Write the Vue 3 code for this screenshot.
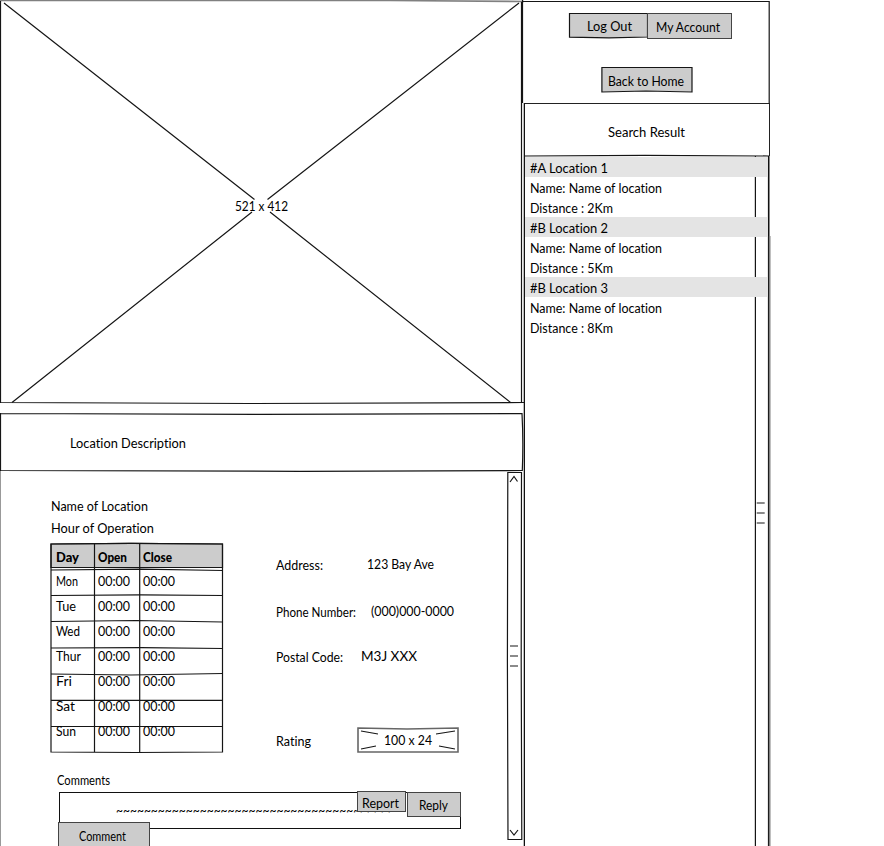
<script setup>
import { h } from 'vue'

// One line of lettering, fitted to the width its wireframe slot has.
const Label = (props) =>
  h('svg', { class: 'label', width: props.w, height: 18 }, [
    h('text', { x: 0, y: 13.5, textLength: props.w, lengthAdjust: 'spacingAndGlyphs' }, props.t),
  ])
Label.props = ['t', 'w']

const results = [
  { title: '#A Location 1', distance: 'Distance : 2Km' },
  { title: '#B Location 2', distance: 'Distance : 5Km' },
  { title: '#B Location 3', distance: 'Distance : 8Km' },
]

const days = [
  ['Mon', 22], ['Tue', 20], ['Wed', 24], ['Thur', 25], ['Fri', 16], ['Sat', 19], ['Sun', 20],
].map(([name, w], i) => ({ name, w, shift: 2.5 - i * 1.1 }))

const tildes = '~'.repeat(40)
</script>

<template>
  <div class="page">
    <main class="left">
      <section class="map">
        <svg class="ink" viewBox="0 0 524 404" width="524" height="404">
          <path class="soft" d="M0 .5H390L524 1.5" />
          <path d="M.5 1V403M521.5 2V403M0 402.5L250 403.5L524 402.5" />
          <path d="M4 3L254.500 199.500M267.500 199.500L519 3M252 212L12 402.500M270 212L510.500 402.500" />
        </svg>
        <Label t="521 x 412" :w="53" />
      </section>

      <header class="desc-head">
        <svg class="ink" viewBox="0 0 524 59" width="524" height="59">
          <path d="M0 .5L260 1.300L522 .5Q523.500 28 522.300 57.500L300 58.300L0 57.500M.5 0V58" />
        </svg>
        <Label t="Location Description" :w="116" />
      </header>

      <div class="desc">
        <section class="details">
          <Label t="Name of Location" :w="97" />
          <Label class="hour" t="Hour of Operation" :w="103" />

          <div class="info">
            <div class="hours">
              <svg class="ink" viewBox="0 0 172 210" width="172" height="210">
                <path class="fill" d="M0 1L80 .3L171.500 1V24.500H0Z" />
                <path d="M0 1L80 .3L171.500 1V209L85 209.500L0 209Z" />
                <path d="M0 24.500H172M0 27L90 26.200L172 27.500" />
                <path d="M0 52.500L90 51.800L172 52.500M0 78.500L85 77.500L172 79M0 105L90 104.700L172 105.500M0 131L80 132L172 130.500M0 157.300H172M0 183.500H172" />
                <path d="M43.500 1V209M88.700 1V209" />
              </svg>
              <div class="row head">
                <Label t="Day" :w="23" /><Label t="Open" :w="29" /><Label t="Close" :w="29" />
              </div>
              <div v-for="d in days" :key="d.name" class="row">
                <div class="cells" :style="{ marginTop: d.shift + 'px' }">
                  <Label :t="d.name" :w="d.w" /><Label t="00:00" :w="32" /><Label t="00:00" :w="32" />
                </div>
              </div>
            </div>

            <div class="fields">
              <div class="field address"><Label t="Address:" :w="47" /><Label class="up" t="123 Bay Ave" :w="67" /></div>
              <div class="field phone"><Label t="Phone Number:" :w="80" /><Label class="up" t="(000)000-0000" :w="83" /></div>
              <div class="field postal"><Label t="Postal Code:" :w="67" /><Label class="up" t="M3J XXX" :w="56" /></div>
              <div class="field rating">
                <Label t="Rating" :w="35" />
                <div class="stars">
                  <svg class="ink" viewBox="0 0 102 26" width="102" height="26">
                    <path class="soft dark" d="M1 1L50 2L101 1V25H1Z" />
                    <path d="M4 4L21 7M4 22L19 19M98 4L79 7M98 22L82 19" />
                  </svg>
                  <Label t="100 x 24" :w="48" />
                </div>
              </div>
            </div>
          </div>

          <Label class="comments-title" t="Comments" :w="53" />
          <div class="comment-box">
            <Label :t="tildes" :w="279" />
            <div class="btn report"><Label t="Report" :w="37" /></div>
            <div class="btn reply"><Label t="Reply" :w="29" /></div>
            <div class="btn comment"><Label t="Comment" :w="47" /></div>
          </div>
        </section>

        <svg class="scroll" viewBox="0 0 17 375" width="17" height="375">
          <path d="M.8 1.500H14.500L14.200 190L14.800 368.500H1L.4 190Z" />
          <path d="M3 11L7 5.500L10.500 10.500M3 359L7 364L11 359" />
          <path class="soft dark" d="M3 175H11M3 185H11M3 195H11" />
        </svg>
      </div>
    </main>

    <aside class="right">
      <div class="account">
        <svg class="ink" viewBox="0 0 248 104" width="248" height="104">
          <path d="M0 1.500H247.200V103M.5 0V103" />
        </svg>
        <div class="buttons">
          <div class="btn logout">
            <svg class="ink" viewBox="0 0 79 25" width="79" height="25"><path class="fill" d="M.5 .5H78.500V24L40 24.800L.5 24.200Z" /></svg>
            <Label t="Log Out" :w="45" />
          </div>
          <div class="btn my"><Label t="My Account" :w="64" /></div>
        </div>
        <div class="btn home">
          <svg class="ink" viewBox="0 0 91 26" width="91" height="26"><path class="fill" d="M.9 .5H91V25L45 24L.9 25Z" /></svg>
          <Label t="Back to Home" :w="76" />
        </div>
      </div>

      <div class="panel">
        <header class="result-head"><Label t="Search Result" :w="77" /></header>
        <div class="results">
          <svg class="ink" viewBox="0 0 247 690" width="247" height="690">
            <path d="M0 0L120 -.6L244 0M230.400 0V690" />
            <path class="edge" d="M243.700 0V690" />
            <path class="soft" d="M244.700 80V690" />
            <path class="soft dark" d="M231.700 347H239.700M231.700 357H239.700M231.700 367H239.700" />
          </svg>
          <div v-for="r in results" :key="r.title" class="result">
            <div class="title"><Label :t="r.title" :w="78" /></div>
            <div><Label t="Name: Name of location" :w="132" /></div>
            <div><Label :t="r.distance" :w="83" /></div>
          </div>
        </div>
      </div>
    </aside>
  </div>
</template>

<style>
body { background: #fff; overflow: hidden; }
.label {
  display: block;
  flex: none;
  position: relative;
  overflow: visible;
  font: 12.5px Lato, "Open Sans", sans-serif;
  font-variant-ligatures: none;
  fill: #000;
}
</style>

<style scoped>
.page { display: flex; width: 884px; height: 846px; overflow: hidden; background: #fff; }
.ink { position: absolute; left: 0; top: 0; overflow: visible; }
path { fill: none; stroke: #151515; stroke-width: 1.2; }
path.fill { fill: #ccc; }
path.soft { stroke: #808080; stroke-width: 1.6; }
path.dark { stroke: #666; }
path.edge { stroke: #111; stroke-width: 1.6; }

.left { width: 522px; flex: none; }
.map { position: relative; height: 403px; display: flex; padding: 197px 0 0 235px; box-sizing: border-box; }
.desc-head { position: relative; height: 58px; margin-top: 10px; padding: 21px 0 0 70px; box-sizing: border-box; }
.desc { display: flex; height: 375px; }
.details { flex: none; width: 507px; box-sizing: border-box; padding: 26px 0 0 50px; border-left: 1px solid #999; }
.scroll { flex: none; overflow: visible; }
.hour { margin-top: 4px; }
.info { display: flex; margin-top: 6px; height: 228px; }

.hours { position: relative; width: 172px; }
.row { height: 26.1px; overflow: hidden; }
.row.head, .cells { display: grid; grid-template-columns: 42px 45px auto; padding-left: 5px; }
.row.head { height: 26.5px; padding-top: 5px; box-sizing: border-box; overflow: visible; }
.head .label { font-weight: 900; }

.fields { margin-left: 53px; padding-top: 13px; }
.field { display: flex; height: 18px; }
.up { margin-top: -1px; }
.address { gap: 44px; }
.phone { gap: 15px; margin-top: 29px; }
.postal { gap: 18px; margin-top: 27px; }
.rating { gap: 46px; margin-top: 66px; }
.stars { position: relative; width: 102px; height: 26px; margin-top: -5px; padding: 4px 0 0 27px; box-sizing: border-box; }

.comments-title { margin-left: 6px; }
.comment-box {
  position: relative;
  width: 402px;
  height: 37px;
  box-sizing: border-box;
  margin: 3px 0 0 8px;
  padding: 7.5px 0 0 56px;
  border: 1px solid #111;
}
.btn { position: relative; box-sizing: border-box; background: #ccc; border: 1.6px solid #444; display: flex; }
.report, .reply, .comment { position: absolute; }
.report { left: 297px; top: -2px; width: 49px; height: 21px; padding: 2px 0 0 4px; }
.reply { left: 347px; top: -1px; width: 54px; height: 25px; padding: 3px 0 0 11px; }
.comment { left: -2px; top: 29px; width: 92px; height: 32px; padding: 4px 0 0 20px; }

.right { width: 248px; flex: none; }
.account { position: relative; height: 103px; box-sizing: border-box; padding: 13px 0 0 47px; }
.buttons { display: flex; align-items: flex-start; }
.logout, .home { border: 0; background: none; }
.logout { width: 79px; height: 25px; padding: 4px 0 0 18px; }
.my { width: 85px; height: 26px; margin-left: -1px; padding: 4px 0 0 8px; }
.home { width: 91px; height: 26px; margin: 28px 0 0 32px; padding: 5px 0 0 7px; }
.panel { border-left: 1px solid #111; box-sizing: border-box; margin-left: 2px; width: 246px; box-shadow: -1px 0 0 #bbb; }
.result-head { height: 53px; box-sizing: border-box; border: 1px solid #222; border-width: 1px 1px 0 0; padding: 19px 0 0 83px; }
.results { position: relative; height: 690px; padding-top: 1px; box-sizing: border-box; }
.result > div { position: relative; height: 20px; box-sizing: border-box; padding: 2px 0 0 5px; }
.result .title { width: 243px; background: #e4e4e4; }
</style>
